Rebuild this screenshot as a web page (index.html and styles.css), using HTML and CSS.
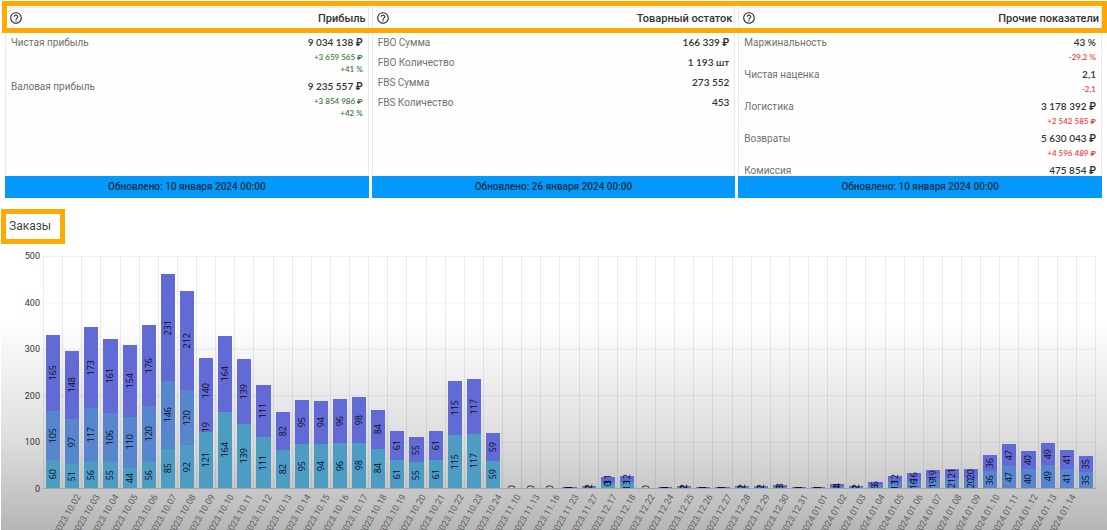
FILE: index.html
```html
<!DOCTYPE html>
<html lang="ru">
<head>
<meta charset="utf-8">
<meta name="viewport" content="width=device-width, initial-scale=1">
<title>Показатели</title>
<link rel="stylesheet" href="styles.css">
</head>
<body>
<svg class="sprite" aria-hidden="true">
  <symbol id="help" viewBox="0 0 24 24">
    <path fill="currentColor" d="M11 18h2v-2h-2v2zm1-16C6.480 2 2 6.480 2 12s4.480 10 10 10 10-4.480 10-10S17.520 2 12 2zm0 18c-4.410 0-8-3.590-8-8s3.590-8 8-8 8 3.590 8 8-3.590 8-8 8zm0-14c-2.210 0-4 1.790-4 4h2c0-1.100.9-2 2-2s2 .9 2 2c0 2-3 1.750-3 5h2c0-2.250 3-2.500 3-5 0-2.210-1.790-4-4-4z"/>
  </symbol>
</svg>

<main class="dashboard">
  <div class="cards">
    <section class="card">
      <header class="card-head">
        <button class="help" type="button" aria-label="Справка"><svg><use href="#help"/></svg></button>
        <h2>Прибыль</h2>
      </header>
      <dl class="metrics">
        <div class="metric"><dt>Чистая прибыль</dt><dd>9 034 138 ₽<small class="up">+3 659 565 ₽</small><small class="up">+41 %</small></dd></div>
        <div class="metric"><dt>Валовая прибыль</dt><dd>9 235 557 ₽<small class="up">+3 854 986 ₽</small><small class="up">+42 %</small></dd></div>
      </dl>
      <footer class="updated">Обновлено: 10 января 2024 00:00</footer>
    </section>

    <section class="card">
      <header class="card-head">
        <button class="help" type="button" aria-label="Справка"><svg><use href="#help"/></svg></button>
        <h2>Товарный остаток</h2>
      </header>
      <dl class="metrics">
        <div class="metric"><dt>FBO Сумма</dt><dd>166 339 ₽</dd></div>
        <div class="metric"><dt>FBO Количество</dt><dd>1 193 шт</dd></div>
        <div class="metric"><dt>FBS Сумма</dt><dd>273 552</dd></div>
        <div class="metric"><dt>FBS Количество</dt><dd>453</dd></div>
      </dl>
      <footer class="updated">Обновлено: 26 января 2024 00:00</footer>
    </section>

    <section class="card">
      <header class="card-head">
        <button class="help" type="button" aria-label="Справка"><svg><use href="#help"/></svg></button>
        <h2>Прочие показатели</h2>
      </header>
      <dl class="metrics">
        <div class="metric"><dt>Маржинальность</dt><dd>43 %<small class="down">-29,2 %</small></dd></div>
        <div class="metric"><dt>Чистая наценка</dt><dd>2,1<small class="down">-2,1</small></dd></div>
        <div class="metric"><dt>Логистика</dt><dd>3 178 392 ₽<small class="down">+2 542 585 ₽</small></dd></div>
        <div class="metric"><dt>Возвраты</dt><dd>5 630 043 ₽<small class="down">+4 596 489 ₽</small></dd></div>
        <div class="metric"><dt>Комиссия</dt><dd>475 854 ₽</dd></div>
      </dl>
      <footer class="updated">Обновлено: 10 января 2024 00:00</footer>
    </section>
    <div class="marker"></div>
  </div>

  <section class="orders">
    <h2 class="orders-title">Заказы</h2>
    <div class="chart">
      <ol class="scale"><li>500</li><li>400</li><li>300</li><li>200</li><li>100</li><li>0</li></ol>
      <div class="plot" id="plot"></div>
      <div class="dates" id="dates"></div>
    </div>
  </section>
</main>
<script src="chart.js"></script>
</body>
</html>
```
FILE: styles.css
```css
* { box-sizing: border-box; }

html, body { height: 100%; }

body {
  margin: 0;
  background: #fff;
  font-family: Roboto, "Liberation Sans", sans-serif;
  font-size: 10px;
  color: #333;
}

h2, dl, dd, ol { margin: 0; padding: 0; }

.sprite { position: absolute; width: 0; height: 0; }

.dashboard {
  display: flex;
  flex-direction: column;
  min-height: 100%;
  overflow: hidden;
}

/* Cards */
.cards {
  position: relative;
  display: grid;
  grid-template-columns: repeat(3, minmax(0, 1fr));
  gap: 3px;
  padding: 7px 5px 0;
}

.card {
  display: flex;
  flex-direction: column;
  height: 191px;
  border: 1px solid #eaeaea;
  background: #fefefe;
}

.card-head {
  display: flex;
  justify-content: space-between;
  align-items: center;
  height: 20px;
  padding: 0 2px 0 3px;
}

.card-head h2 { font-size: 11px; font-weight: 500; }

.help {
  display: flex;
  padding: 0;
  border: 0;
  background: none;
  color: #333;
}

.help svg { width: 14px; height: 14px; }

.metrics {
  flex: 1;
  min-height: 0;
  overflow: hidden;
  padding: 6px 5px 0;
}

.metric {
  display: flex;
  justify-content: space-between;
  margin-bottom: 3px;
  line-height: 17px;
}

.metric dt { color: #707070; }

.metric dd {
  font-family: Lato, Roboto, sans-serif;
  font-weight: 600;
  color: #333;
  text-align: right;
}

.metric small {
  display: block;
  font-size: 8px;
  line-height: 12px;
}

.up { color: #3c7a3f; }
.down { color: #f3403b; }

.updated {
  margin: 0 -1px -1px;
  background: #0599fb;
  color: #123047;
  font-weight: 500;
  line-height: 22px;
  text-align: center;
}

.marker {
  position: absolute;
  inset: 1px 0 auto 2px;
  height: 32px;
  border: 5px solid #ffa904;
}

/* Orders chart */
.orders {
  flex: 1;
  margin-left: 1px;
  padding-top: 11px;
  background: linear-gradient(#fff 120px, #dedede 240px, #b6b6b6);
}

.orders-title {
  width: max-content;
  padding: 0 9px 0 3px;
  border: 5px solid #ffa904;
  font-size: 12px;
  font-weight: 400;
  line-height: 25px;
  color: #444;
}

.chart {
  display: grid;
  grid-template-columns: 42px minmax(0, 1fr);
  grid-template-rows: 233px 41px;
  padding: 12px 11px 0 0;
}

.scale {
  display: flex;
  flex-direction: column;
  justify-content: space-between;
  padding-right: 3px;
  list-style: none;
  font-size: 9px;
  line-height: 0;
  text-align: right;
}

.scale li { height: 0; }

.plot {
  display: flex;
  overflow: hidden;
  border-right: 1px solid rgba(0, 0, 0, .08);
  border-bottom: 1px solid rgba(0, 0, 0, .12);
  background: linear-gradient(rgba(0, 0, 0, .06) 1px, transparent 1px) 0 0 / 100% 20%;
}

.col {
  display: flex;
  flex: 1 1 0;
  flex-direction: column-reverse;
  align-items: center;
  min-width: 0;
  border-left: 1px solid rgba(0, 0, 0, .08);
}

.seg {
  display: flex;
  flex: none;
  justify-content: center;
  align-items: center;
  width: 78%;
  font-family: "Open Sans", "Noto Sans", sans-serif;
  font-size: 9px;
  font-weight: 500;
  line-height: 10px;
  color: #0c0c24;
}

.seg span { writing-mode: vertical-rl; transform: rotate(180deg); }

.teal { background: #4c9cc4; }
.blue { background: #5786cf; }
.violet { background: #626ad6; }

.dates { display: flex; grid-column: 2; }

.date {
  display: flex;
  flex: 1 1 0;
  justify-content: flex-end;
  min-width: 0;
  padding: 3px 8px 0 0;
}

.date span {
  height: 12px;
  font-size: 9px;
  line-height: 12px;
  white-space: nowrap;
  color: #606060;
  transform: rotate(-60deg);
  transform-origin: right top;
}
```
FILE: chart.js
```js
// Each row: date label, then [series, value] pairs from the bottom up.
const pair = (date, n, low = "teal") => [date, [low, n], ["violet", n]];
const triple = (date, a, b, c) => [date, ["teal", a], ["blue", b], ["violet", c]];

const rows = [
  triple("", 60, 105, 165),
  triple("2023.10.02", 51, 97, 148),
  triple("2023.10.03", 56, 117, 173),
  triple("2023.10.04", 55, 106, 161),
  triple("2023.10.05", 44, 110, 154),
  triple("2023.10.06", 56, 120, 176),
  triple("2023.10.07", 85, 146, 231),
  triple("2023.10.08", 92, 120, 212),
  ["2023.10.09", ["teal", 121], ["violet", 19], ["violet", 140]],
  pair("2023.10.10", 164),
  pair("2023.10.11", 139),
  pair("2023.10.12", 111),
  pair("2023.10.13", 82),
  pair("2023.10.14", 95),
  pair("2023.10.15", 94),
  pair("2023.10.16", 96),
  pair("2023.10.17", 98),
  pair("2023.10.18", 84),
  pair("2023.10.19", 61),
  pair("2023.10.20", 55),
  pair("2023.10.21", 61),
  pair("2023.10.22", 115),
  pair("2023.10.23", 117),
  pair("2023.10.24", 59),
  ["2023.11.10", ["teal", 0]],
  ["2023.11.13", ["teal", 0]],
  ["2023.11.16", ["teal", 0]],
  pair("2023.11.23", 1, "blue"),
  pair("2023.11.27", 2, "blue"),
  ["2023.12.17", ["teal", 10], ["blue", 3], ["violet", 11]],
  ["2023.12.18", ["teal", 13], ["violet", 12]],
  ["2023.12.22", ["teal", 0]],
  pair("2023.12.24", 1, "blue"),
  pair("2023.12.25", 2, "blue"),
  pair("2023.12.26", 1, "blue"),
  pair("2023.12.27", 1, "blue"),
  pair("2023.12.28", 2, "blue"),
  pair("2023.12.29", 2, "blue"),
  pair("2023.12.30", 3, "blue"),
  pair("2023.12.31", 1, "blue"),
  pair("2024.01.01", 1, "blue"),
  pair("2024.01.02", 4, "blue"),
  pair("2024.01.03", 2, "blue"),
  pair("2024.01.04", 6, "blue"),
  ["2024.01.05", ["blue", 13], ["violet", 12]],
  pair("2024.01.06", 16, "blue"),
  pair("2024.01.07", 19, "blue"),
  pair("2024.01.08", 21, "blue"),
  pair("2024.01.09", 20, "blue"),
  pair("2024.01.10", 36, "blue"),
  pair("2024.01.11", 47, "blue"),
  pair("2024.01.12", 40, "blue"),
  pair("2024.01.13", 49, "blue"),
  pair("2024.01.14", 41, "blue"),
  pair("", 35, "blue"),
];

const MAX = 500;
const plot = document.getElementById("plot");
const dates = document.getElementById("dates");

const add = (parent, tag, className, text) => {
  const node = document.createElement(tag);
  if (className) node.className = className;
  if (text !== undefined) node.textContent = text;
  parent.append(node);
  return node;
};

for (const [date, ...segments] of rows) {
  const col = add(plot, "div", "col");
  for (const [series, value] of segments) {
    const seg = add(col, "div", "seg " + series);
    seg.style.height = (value / MAX) * 100 + "%";
    add(seg, "span", "", value);
  }
  const cell = add(dates, "div", "date");
  if (date) add(cell, "span", "", date);
}
```
